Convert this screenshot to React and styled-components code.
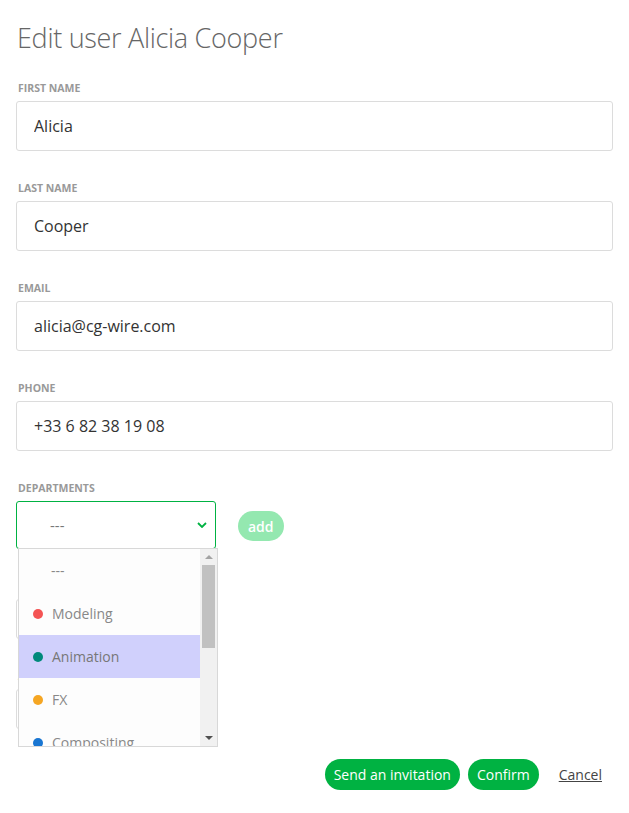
import React from 'react'
import styled, { createGlobalStyle } from 'styled-components';

const GlobalStyle = createGlobalStyle`
    body{
        margin: 0;
        background: #ffffff;
        font-family: "Open Sans", "Noto Sans", sans-serif;
    }
`;

const departments = [
    { name: '---', color: null },
    { name: 'Modeling', color: '#f45454' },
    { name: 'Animation', color: '#00897b' },
    { name: 'FX', color: '#f5a623' },
    { name: 'Compositing', color: '#1976d2' },
];

function TextField({ label, value }) {
    return (
        <Field>
            <Label>{label}</Label>
            <Input readOnly value={value} />
        </Field>
    )
}

function App() {
    return (
        <>
            <GlobalStyle />
            <Modal>
                <Title>Edit user Alicia Cooper</Title>
                <TextField label="First name" value="Alicia" />
                <TextField label="Last name" value="Cooper" />
                <TextField label="Email" value="alicia@cg-wire.com" />
                <TextField label="Phone" value="+33 6 82 38 19 08" />

                <Field>
                    <Label>Departments</Label>
                    <DeptRow>
                        <SelectWrap>
                            <Select>
                                <span>---</span>
                                <Chevron viewBox="0 0 10 6">
                                    <path d="M1 1 L5 5 L9 1" />
                                </Chevron>
                            </Select>
                            <Dropdown>
                                <Options>
                                    {departments.map((dep, index) => (
                                        <Option key={index} $selected={dep.name === 'Animation'}>
                                            {dep.color && <Dot $color={dep.color} />}
                                            {dep.name}
                                        </Option>
                                    ))}
                                </Options>
                                <Scrollbar>
                                    <Arrow $up />
                                    <Track>
                                        <Thumb />
                                    </Track>
                                    <Arrow />
                                </Scrollbar>
                            </Dropdown>
                        </SelectWrap>
                        <AddButton>add</AddButton>
                    </DeptRow>
                </Field>

                <Field $top={4}>
                    <Label>Role</Label>
                    <SmallSelect>Artist</SmallSelect>
                </Field>
                <Field>
                    <Label>Active</Label>
                    <SmallSelect>Yes</SmallSelect>
                </Field>

                <Footer>
                    <Button>Send an invitation</Button>
                    <Button>Confirm</Button>
                    <CancelLink>Cancel</CancelLink>
                </Footer>
            </Modal>
        </>
    )
}

const Modal = styled.div`
    width: 629px;
    height: 813px;
    box-sizing: border-box;
    padding: 18px 16px 0 16px;
    overflow: hidden;
`;

const Title = styled.h1`
    margin: 0 0 23px 1px;
    font-size: 27px;
    line-height: 40px;
    font-weight: 300;
    letter-spacing: -0.3px;
    color: #666;
`;

const Field = styled.div`
    margin-top: ${p => p.$top || 0}px;
    margin-bottom: 30px;
`;

const Label = styled.div`
    font-size: 10.5px;
    line-height: 14px;
    font-weight: 700;
    text-transform: uppercase;
    color: #999;
    padding-left: 2px;
    margin-bottom: 6px;
`;

const Input = styled.input`
    display: block;
    width: 100%;
    height: 50px;
    box-sizing: border-box;
    border: 1px solid #dcdcdc;
    border-radius: 3px;
    padding: 0 17px;
    font-family: inherit;
    font-size: 16px;
    color: #333;
    background: #fff;
    outline: none;
`;

const DeptRow = styled.div`
    display: flex;
    align-items: center;
    gap: 22px;
`;

const SelectWrap = styled.div`
    position: relative;
    width: 200px;
`;

const Select = styled.div`
    height: 48px;
    box-sizing: border-box;
    border: 1px solid #00b242;
    border-radius: 3px;
    display: flex;
    align-items: center;
    justify-content: space-between;
    padding: 0 8px 0 33px;
    font-size: 15px;
    color: #777;
    background: #fff;
`;

const Chevron = styled.svg`
    width: 10px;
    height: 6px;
    fill: none;
    stroke: #00b242;
    stroke-width: 1.8;
`;

const Dropdown = styled.div`
    position: absolute;
    top: 47px;
    left: 2px;
    width: 200px;
    height: 199px;
    box-sizing: border-box;
    border: 1px solid #d8d8d8;
    background: #fdfdfd;
    display: flex;
    overflow: hidden;
    z-index: 2;
`;

const Options = styled.div`
    flex: 1;
`;

const Option = styled.div`
    height: 43px;
    display: flex;
    align-items: center;
    gap: 9px;
    padding-left: 32px;
    font-size: 14px;
    color: ${p => p.$selected ? '#777' : '#888'};
    background: ${p => p.$selected ? '#d0d0fc' : 'transparent'};
`;

const Dot = styled.span`
    width: 10px;
    height: 10px;
    border-radius: 50%;
    background: ${p => p.$color};
    margin-left: -18px;
`;

const Scrollbar = styled.div`
    width: 17px;
    background: #f1f1f1;
    display: flex;
    flex-direction: column;
    align-items: center;
`;

const Arrow = styled.div`
    height: 16px;
    width: 17px;
    display: flex;
    align-items: center;
    justify-content: center;
    &::after{
        content: "";
        border-left: 4px solid transparent;
        border-right: 4px solid transparent;
        ${p => p.$up ? 'border-bottom: 4px solid #a3a3a3;' : 'border-top: 4px solid #505050;'}
    }
`;

const Track = styled.div`
    flex: 1;
    width: 100%;
    display: flex;
    justify-content: center;
`;

const Thumb = styled.div`
    width: 13px;
    height: 83px;
    background: #c1c1c1;
`;

const AddButton = styled.button`
    height: 30px;
    padding: 0 10px;
    border: none;
    border-radius: 15px;
    background: #94e8b0;
    color: #fff;
    font-family: inherit;
    font-size: 14px;
    font-weight: 600;
    margin-top: 2px;
`;

const SmallSelect = styled.div`
    width: 200px;
    height: 40px;
    box-sizing: border-box;
    border: 1px solid #dcdcdc;
    border-radius: 3px;
    padding: 0 12px;
    display: flex;
    align-items: center;
    font-size: 14px;
    color: #333;
`;

const Footer = styled.div`
    display: flex;
    justify-content: flex-end;
    align-items: center;
    gap: 8px;
    padding-right: 11px;
    margin-top: 2px;
`;

const Button = styled.button`
    height: 31px;
    padding: 0 9px;
    border: none;
    border-radius: 16px;
    background: #00b242;
    color: #fff;
    font-family: inherit;
    font-size: 14px;
    font-weight: 500;
`;

const CancelLink = styled.a`
    margin-left: 12px;
    font-size: 14px;
    color: #444;
    text-decoration: underline;
`;

export default App
